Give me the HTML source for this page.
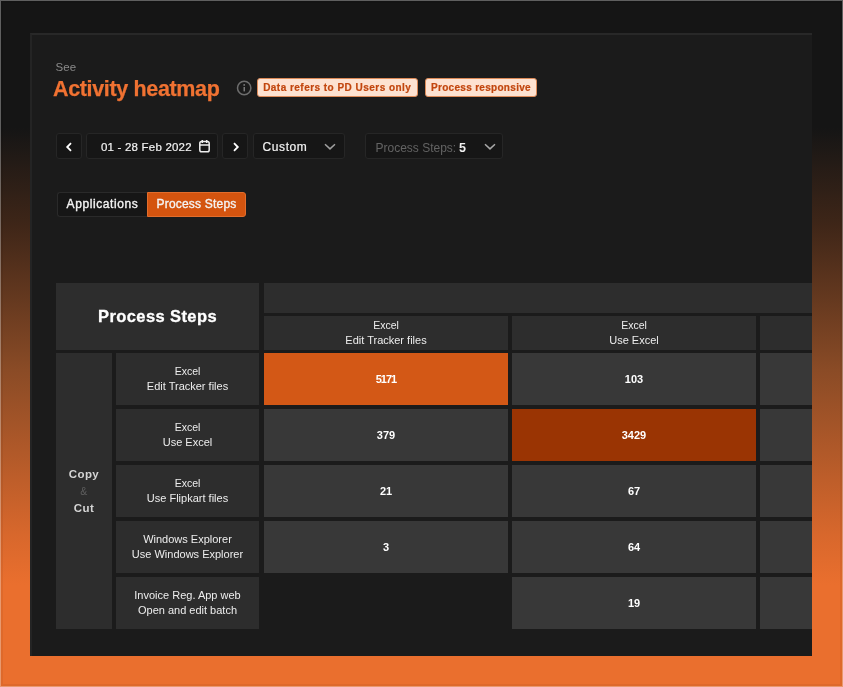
<!DOCTYPE html>
<html lang="en">
<head>
<meta charset="utf-8">
<title>Activity heatmap</title>
<style>
*{box-sizing:border-box;margin:0;padding:0}
html,body{width:843px;height:687px;overflow:hidden;background:#151515}
body{font-family:"Liberation Sans",sans-serif;color:#f2f2f2;position:relative;
 background:linear-gradient(180deg,#151515 0px,#151515 128px,#3f2618 226px,#8a4b26 370px,#d7672c 533px,#ea6f2e 585px,#ea6f2e 687px)}
.frame{position:absolute;left:0;top:0;width:843px;height:687px;
 box-shadow:inset 0 0 0 1px rgba(255,255,255,.32),inset 0 0 0 3px rgba(0,0,0,.05);pointer-events:none;z-index:9}
.panel{position:absolute;left:30px;top:33px;width:782px;height:622.5px;background:#1b1b1b;
 border-top:2px solid #282828;border-left:2px solid #242424;overflow:hidden}
.abs{position:absolute}
.see{left:55.6px;top:60px;font-size:11.5px;color:#8a8a8a;line-height:14px;letter-spacing:.1px}
.title{left:53px;top:75.8px;font-size:21.5px;font-weight:700;color:#f07232;line-height:26px;letter-spacing:-.35px;white-space:nowrap;-webkit-text-stroke:.25px #f07232}
.badge{top:78px;height:19px;background:#fde2d1;border:1px solid #dc8a58;border-radius:3px;
 color:#c2460e;font-weight:700;font-size:10px;line-height:17px;letter-spacing:.47px;text-align:center;white-space:nowrap;-webkit-text-stroke:.2px #c2460e}
.btn{top:133px;height:26px;background:#161616;border:1px solid #262626;border-radius:3px}
.btn span{position:absolute;white-space:nowrap;font-size:12.5px;line-height:24px;top:1px}
.tab{top:192.3px;height:24.5px;font-size:12px;line-height:22.5px;-webkit-text-stroke:.35px #f4f4f4;text-align:center;white-space:nowrap;color:#f4f4f4}
.c{position:absolute;display:flex;flex-direction:column;align-items:center;justify-content:center;
 text-align:center;white-space:nowrap;font-size:11px;line-height:14.5px;color:#ededed}
.h{background:#2d2d2d}
.f{position:relative;top:-1px}
.e{font-size:10.5px}
.ch{padding-bottom:0}
.d{background:#383838;font-weight:700;font-size:11px;color:#fff}
</style>
</head>
<body>
<div class="panel"></div>
<div id="layer" style="position:absolute;left:0;top:0;width:843px;height:687px;will-change:transform">

<div class="abs see">See</div>
<div class="abs title">Activity heatmap</div>
<svg class="abs" style="left:236px;top:80px" width="16" height="16" viewBox="0 0 16 16">
 <circle cx="8.2" cy="8" r="6.7" fill="none" stroke="#6e6e6e" stroke-width="1.5"/>
 <rect x="7.5" y="7" width="1.5" height="4.4" fill="#7a7a7a"/><circle cx="8.2" cy="4.9" r=".95" fill="#7a7a7a"/>
</svg>
<div class="abs badge" style="left:256.5px;width:161.5px">Data refers to PD Users only</div>
<div class="abs badge" style="left:425px;width:112px;letter-spacing:.3px">Process responsive</div>

<!-- toolbar -->
<div class="abs btn" style="left:56px;width:26px">
 <svg class="abs" style="left:8px;top:8px" width="8" height="10" viewBox="0 0 8 10"><path d="M6 1.2 2.2 5 6 8.8" fill="none" stroke="#fff" stroke-width="1.8"/></svg>
</div>
<div class="abs btn" style="left:86px;width:132px">
 <span style="left:14px;font-size:11.5px;letter-spacing:.2px;-webkit-text-stroke:.2px #f2f2f2">01 - 28 Feb 2022</span>
 <svg class="abs" style="left:112px;top:5px" width="11" height="14" viewBox="0 0 11 14">
  <rect x=".8" y="2.6" width="9.4" height="10.2" rx="1.8" fill="none" stroke="#eee" stroke-width="1.5"/>
  <path d="M.8 6h9.4M3.3 1v3M7.7 1v3" stroke="#eee" stroke-width="1.5" fill="none"/>
 </svg>
</div>
<div class="abs btn" style="left:222px;width:26px">
 <svg class="abs" style="left:9px;top:8px" width="8" height="10" viewBox="0 0 8 10"><path d="M2 1.2 5.8 5 2 8.8" fill="none" stroke="#fff" stroke-width="1.8"/></svg>
</div>
<div class="abs btn" style="left:253px;width:92px">
 <span style="left:8.5px;font-size:12px;letter-spacing:.6px;-webkit-text-stroke:.2px #f2f2f2">Custom</span>
 <svg class="abs" style="left:70px;top:9px" width="12" height="8" viewBox="0 0 12 8"><path d="M1 1.3l5 4.6 5-4.6" fill="none" stroke="#a0a0a0" stroke-width="1.5"/></svg>
</div>
<div class="abs btn" style="left:365px;width:138px">
 <span style="left:9.5px;color:#636363;font-size:12px;top:2px">Process Steps:</span>
 <span style="left:93px;font-weight:700;color:#f0f0f0;top:2px">5</span>
 <svg class="abs" style="left:117.5px;top:9px" width="12" height="8" viewBox="0 0 12 8"><path d="M1 1.3l5 4.6 5-4.6" fill="none" stroke="#a8a8a8" stroke-width="1.5"/></svg>
</div>

<!-- tabs -->
<div class="abs tab" style="left:57px;width:90px;background:#161616;border:1px solid #2a2a2a;border-right:0;border-radius:3px 0 0 3px;letter-spacing:.6px">Applications</div>
<div class="abs tab" style="left:147px;width:99px;background:#d4540f;border:1px solid #e26d2c;border-radius:0 3px 3px 0;letter-spacing:.2px">Process Steps</div>

<!-- table -->
<div class="c h" style="left:56px;top:283.4px;width:203px;height:66.6px;padding-bottom:1px;font-size:16.5px;font-weight:700;color:#fff;letter-spacing:.4px;-webkit-text-stroke:.3px #fff">Process Steps</div>
<div class="c h" style="left:264px;top:283.4px;width:548px;height:29.6px"></div>
<div class="c h ch" style="left:264px;top:316px;width:244px;height:34px"><div class="f e">Excel</div><div>Edit Tracker files</div></div>
<div class="c h ch" style="left:512px;top:316px;width:244px;height:34px"><div class="f e">Excel</div><div>Use Excel</div></div>
<div class="c h" style="left:760px;top:316px;width:52px;height:34px"></div>

<div class="c h" style="left:56px;top:353px;width:56px;height:276px;font-weight:700;font-size:11.5px;line-height:17px;letter-spacing:.4px;color:#d4d4d4"><div>Copy</div><div style="font-weight:400;color:#5e5e5e;font-size:10.5px">&amp;</div><div>Cut</div></div>

<div class="c h" style="left:116px;top:353px;width:143px;height:52px"><div class="f e">Excel</div><div>Edit Tracker files</div></div>
<div class="c h" style="left:116px;top:409px;width:143px;height:52px"><div class="f e">Excel</div><div>Use Excel</div></div>
<div class="c h" style="left:116px;top:465px;width:143px;height:52px"><div class="f e">Excel</div><div>Use Flipkart files</div></div>
<div class="c h" style="left:116px;top:521px;width:143px;height:52px"><div class="f">Windows Explorer</div><div>Use Windows Explorer</div></div>
<div class="c h" style="left:116px;top:577px;width:143px;height:52px"><div class="f">Invoice Reg. App web</div><div>Open and edit batch</div></div>

<div class="c d" style="left:264px;top:353px;width:244px;height:52px;background:#d35816;letter-spacing:-1px">5171</div>
<div class="c d" style="left:264px;top:409px;width:244px;height:52px">379</div>
<div class="c d" style="left:264px;top:465px;width:244px;height:52px">21</div>
<div class="c d" style="left:264px;top:521px;width:244px;height:52px">3</div>

<div class="c d" style="left:512px;top:353px;width:244px;height:52px">103</div>
<div class="c d" style="left:512px;top:409px;width:244px;height:52px;background:#9a3403">3429</div>
<div class="c d" style="left:512px;top:465px;width:244px;height:52px">67</div>
<div class="c d" style="left:512px;top:521px;width:244px;height:52px">64</div>
<div class="c d" style="left:512px;top:577px;width:244px;height:52px">19</div>

<div class="c d" style="left:760px;top:353px;width:52px;height:52px"></div>
<div class="c d" style="left:760px;top:409px;width:52px;height:52px"></div>
<div class="c d" style="left:760px;top:465px;width:52px;height:52px"></div>
<div class="c d" style="left:760px;top:521px;width:52px;height:52px"></div>
<div class="c d" style="left:760px;top:577px;width:52px;height:52px"></div>

</div>
<div class="frame"></div>
</body>
</html>
